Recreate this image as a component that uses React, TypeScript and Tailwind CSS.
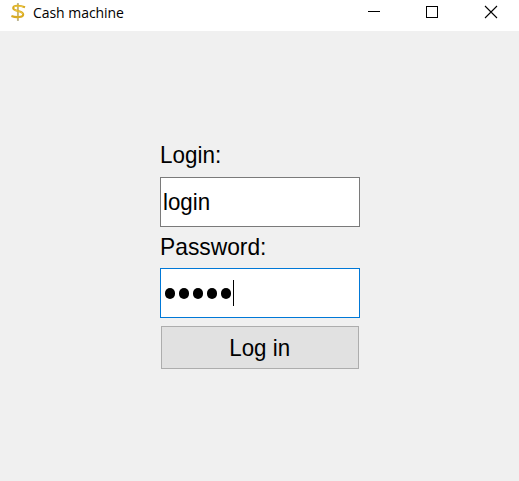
import React from 'react';

function Coin() {
  return (
    <svg width="16" height="20" viewBox="0 0 16 20" fill="none">
      <path d="M7.9 1V19" stroke="#a39868" strokeWidth="1.9" opacity="0.7" />
      <path d="M15 5.2C11 3.6 3.4 2.6 3.2 6C3 9.4 13 8.6 13.2 12.2C13.4 15.8 5.5 15.6 1.4 14" stroke="#d8aa22" strokeWidth="2.1" />
      <path d="M4 5C5.5 3.8 9 3.8 13 4.9M4.5 8C8 9.2 12 9.8 12.6 12" stroke="#f7d452" strokeWidth="0.8" />
      <path d="M7.9 2V18" stroke="#e3b72c" strokeWidth="0.7" />
    </svg>
  );
}

export default function App() {
  return (
    <div className="flex h-[481px] w-[519px] flex-col bg-[#f0f0f0] text-black">
      <header className="flex h-[31px] shrink-0 items-start bg-white">
        <div className="flex grow items-start pt-[2px] pl-[10px]">
          <Coin />
          <span className="ml-[7px] font-['Open_Sans','Noto_Sans',sans-serif] text-[14px] leading-[21px] tracking-[-0.05px]">Cash machine</span>
        </div>
        <svg width="151" height="24" viewBox="0 0 151 24" fill="none" stroke="#000" shapeRendering="crispEdges">
          <path d="M0 11.5H12" />
          <rect x="58.5" y="6.5" width="11" height="11" />
          <path d="M117 6L129 18M129 6L117 18" shapeRendering="auto" strokeWidth="1.1" />
        </svg>
      </header>
      <main className="flex flex-col pt-[106px] pl-[160px] font-['Liberation_Sans',Arial,sans-serif] text-[24px]">
        <label className="h-[40px] origin-left scale-x-[0.935] leading-[36px]">Login:</label>
        <div className="flex h-[50px] w-[200px] items-center border border-[#7a7a7a] bg-white pl-[2px]">
          <span className="origin-left scale-x-[0.93]">login</span>
        </div>
        <label className="h-[41px] origin-left scale-x-[0.95] leading-[40px]">Password:</label>
        <div className="flex h-[50px] w-[200px] items-center border border-[#0078d7] bg-white pl-[4px]">
          <span className="flex gap-[4px] pt-px">
            {[0, 1, 2, 3, 4].map((i) => <i key={i} className="h-[11px] w-[10px] rounded-full bg-black" />)}
          </span>
          <span className="ml-[2px] h-[26px] w-px bg-black" />
        </div>
        <button className="mt-[8px] ml-px h-[43px] w-[198px] border border-[#adadad] bg-[#e1e1e1]">
          <span className="inline-block scale-x-[0.93]">Log in</span>
        </button>
      </main>
    </div>
  );
}
